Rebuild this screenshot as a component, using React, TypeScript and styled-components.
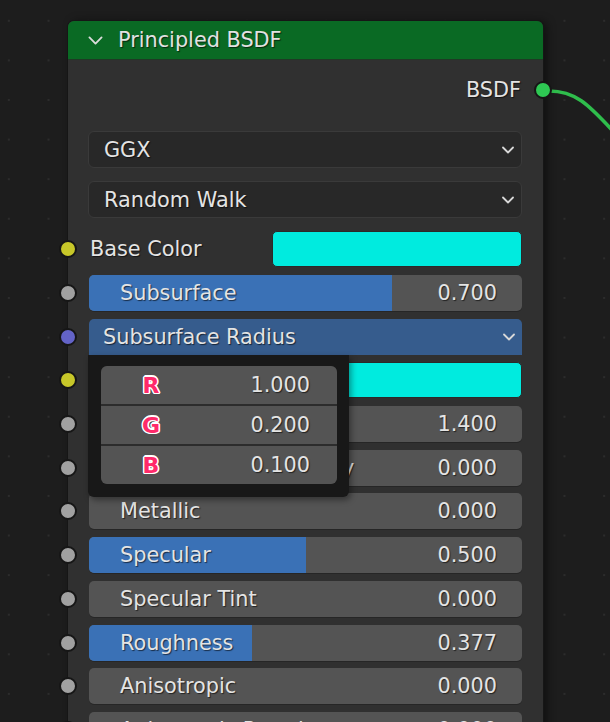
import React from "react";
import styled, { createGlobalStyle } from "styled-components";

const Global = createGlobalStyle`
  html, body { margin: 0; padding: 0; overflow: hidden; background: #1d1d1d; }
  * { box-sizing: border-box; }
`;

const Canvas = styled.div`
  position: relative;
  width: 610px;
  height: 722px;
  overflow: hidden;
  background-color: #1d1d1d;
  background-image: radial-gradient(circle, #2c2c2c 1.2px, transparent 1.5px);
  background-size: 39.7px 39.6px;
  background-position: -11px 1px;
  font-family: "DejaVu Sans", "Liberation Sans", sans-serif;
  font-size: 20.8px;
  color: #e4e4e4;
`;

const Link = styled.svg`
  position: absolute;
  left: 0;
  top: 0;
  pointer-events: none;
`;

const Node = styled.div`
  position: absolute;
  left: 68px;
  top: 21px;
  width: 475px;
  height: 760px;
  background: #303030;
  border-radius: 6px 6px 0 0;
  box-shadow: 0 0 0 1px #161616, 4px 0 10px rgba(0, 0, 0, 0.45);
`;

const Header = styled.div`
  display: flex;
  align-items: center;
  gap: 14px;
  height: 39px;
  padding-left: 19px;
  background: #0a6a24;
  border-radius: 6px 6px 0 0;
  border-bottom: 1px solid #1f3a25;
  text-shadow: 1px 1px 1px rgba(0, 0, 0, 0.6);
`;

const Title = styled.span`
  color: #e2e2e2;
`;

const Body = styled.div`
  display: flex;
  flex-direction: column;
  padding: 0 21px 0 20px;
`;

const OutputRow = styled.div`
  position: relative;
  display: flex;
  justify-content: flex-end;
  align-items: center;
  height: 36px;
  margin-top: 12px;
  padding-right: 1px;
  text-shadow: 1px 1px 1px rgba(0, 0, 0, 0.6);
`;

const Socket = styled.span<{ $color: string; $side?: "left" | "right"; $size?: number }>`
  position: absolute;
  top: 50%;
  width: ${(p) => p.$size ?? 18}px;
  height: ${(p) => p.$size ?? 18}px;
  margin-top: ${(p) => -(p.$size ?? 18) / 2}px;
  ${(p) =>
    p.$side === "right"
      ? `right: ${-21 - (p.$size ?? 18) / 2}px;`
      : `left: ${-20 - (p.$size ?? 18) / 2}px;`}
  border-radius: 50%;
  background: ${(p) => p.$color};
  border: 2px solid #161616;
  z-index: 2;
`;

const Dropdown = styled.div<{ $mt: number }>`
  display: flex;
  align-items: center;
  justify-content: space-between;
  height: 37px;
  margin-top: ${(p) => p.$mt}px;
  padding: 0 6px 0 15px;
  background: #282828;
  border: 1.5px solid #3a3a3a;
  border-radius: 6px;
  text-shadow: 1px 1px 1px rgba(0, 0, 0, 0.6);
`;

const Chevron = ({ size = 14, color = "#d8d8d8", stroke = 1.8 }: { size?: number; color?: string; stroke?: number }) => (
  <svg width={size} height={size} viewBox="0 0 14 14">
    <path d="M2 4.5 L7 9.5 L12 4.5" fill="none" stroke={color} strokeWidth={stroke} strokeLinecap="round" strokeLinejoin="round" />
  </svg>
);

const Inputs = styled.div`
  display: flex;
  flex-direction: column;
  gap: 7.7px;
  margin-top: 8px;
`;

const ColorRow = styled.div`
  position: relative;
  display: flex;
  align-items: center;
  justify-content: space-between;
  height: 36px;
  margin-top: 13px;
  text-shadow: 1px 1px 1px rgba(0, 0, 0, 0.6);
`;

const Label = styled.span`
  padding-left: 2px;
`;

const Swatch = styled.div<{ $color: string; $width?: string }>`
  width: ${(p) => p.$width ?? "100%"};
  height: 36px;
  background: ${(p) => p.$color};
  border-radius: 5px;
  border: 1px solid #2a2a2a;
`;

const InputRow = styled.div`
  position: relative;
  height: 36px;
`;

const Slider = styled.div`
  position: relative;
  display: flex;
  align-items: center;
  justify-content: space-between;
  height: 36px;
  margin-left: 1px;
  padding: 0 25px 0 31px;
  background: #545454;
  border-radius: 5px;
  overflow: hidden;
  box-shadow: 0 1px 0 #262626;
  text-shadow: 1px 1px 1px rgba(0, 0, 0, 0.6);
`;

const Fill = styled.div`
  position: absolute;
  left: 0;
  top: 0;
  bottom: 0;
  background: #3a71b6;
`;

const SliderText = styled.span`
  position: relative;
  white-space: nowrap;
`;

const VectorHeader = styled.div`
  display: flex;
  align-items: center;
  justify-content: space-between;
  height: 36px;
  margin-left: 1px;
  padding: 0 6px 0 14px;
  background: #365c8d;
  border-radius: 5px 5px 0 0;
  text-shadow: 1px 1px 1px rgba(0, 0, 0, 0.6);
`;

const Popup = styled.div`
  position: absolute;
  top: 100%;
  left: 0;
  width: 261px;
  padding: 11px 12px 13px 13px;
  background: #181818;
  border-radius: 0 0 6px 6px;
  box-shadow: 2px 3px 6px rgba(0, 0, 0, 0.4);
  z-index: 5;
`;

const VectorBox = styled.div`
  display: flex;
  flex-direction: column;
  gap: 1.5px;
  background: #2c2c2c;
  border-radius: 6px;
  overflow: hidden;
`;

const VectorField = styled.div`
  position: relative;
  display: flex;
  align-items: center;
  justify-content: flex-end;
  height: 38.5px;
  padding-right: 27px;
  background: #545454;
  text-shadow: 1px 1px 1px rgba(0, 0, 0, 0.6);
`;

const Axis = styled.span`
  position: absolute;
  left: 50px;
  top: 50%;
  transform: translate(-50%, -50%);
  font-weight: bold;
  font-size: 22px;
  color: #ff2a6a;
  text-shadow: -1.5px 0 0 #fff, 1.5px 0 0 #fff, 0 -1.5px 0 #fff, 0 1.5px 0 #fff,
    -1px -1px 0 #fff, 1px 1px 0 #fff, -1px 1px 0 #fff, 1px -1px 0 #fff;
`;

type SliderItem = { name: string; value: number; socket: string };

const sliders: SliderItem[] = [
  { name: "Subsurface IOR", value: 1.4, socket: "#a1a1a1" },
  { name: "Subsurface Anisotropy", value: 0, socket: "#a1a1a1" },
  { name: "Metallic", value: 0, socket: "#a1a1a1" },
  { name: "Specular", value: 0.5, socket: "#a1a1a1" },
  { name: "Specular Tint", value: 0, socket: "#a1a1a1" },
  { name: "Roughness", value: 0.377, socket: "#a1a1a1" },
  { name: "Anisotropic", value: 0, socket: "#a1a1a1" },
  { name: "Anisotropic Rotation", value: 0, socket: "#a1a1a1" },
  { name: "Sheen", value: 0, socket: "#a1a1a1" },
];

const SliderField = ({ item, factor = true }: { item: SliderItem; factor?: boolean }) => (
  <InputRow>
    <Socket $color={item.socket} />
    <Slider>
      {factor && item.value > 0 && item.value <= 1 && (
        <Fill style={{ width: `${item.value * 100}%` }} />
      )}
      <SliderText>{item.name}</SliderText>
      <SliderText>{item.value.toFixed(3)}</SliderText>
    </Slider>
  </InputRow>
);

export default function App() {
  return (
    <>
      <Global />
      <Canvas>
        <Link width="610" height="722">
          <path d="M549 91 C 575 91, 588 104, 612 130" fill="none" stroke="#2fbd4c" strokeWidth="3.5" />
        </Link>
        <Node>
          <Header>
            <Chevron size={17} color="#dcdcdc" stroke={1.5} />
            <Title>Principled BSDF</Title>
          </Header>
          <Body>
            <OutputRow>
              <span>BSDF</span>
              <Socket $color="#2ec853" $side="right" $size={18} />
            </OutputRow>
            <Dropdown $mt={23}>
              <span>GGX</span>
              <Chevron />
            </Dropdown>
            <Dropdown $mt={13}>
              <span>Random Walk</span>
              <Chevron />
            </Dropdown>
            <ColorRow>
              <Socket $color="#c7c729" />
              <Label>Base Color</Label>
              <Swatch $color="#00ebdf" $width="250px" />
            </ColorRow>
            <Inputs>
              <SliderField item={{ name: "Subsurface", value: 0.7, socket: "#a1a1a1" }} />
              <InputRow>
                <Socket $color="#6363c7" />
                <VectorHeader>
                  <span>Subsurface Radius</span>
                  <Chevron />
                </VectorHeader>
                <Popup>
                  <VectorBox>
                    <VectorField>
                      <Axis>R</Axis>1.000
                    </VectorField>
                    <VectorField>
                      <Axis>G</Axis>0.200
                    </VectorField>
                    <VectorField>
                      <Axis>B</Axis>0.100
                    </VectorField>
                  </VectorBox>
                </Popup>
              </InputRow>
              <InputRow>
                <Socket $color="#c7c729" />
                <Swatch $color="#00ebdf" />
              </InputRow>
              {sliders.map((s, i) => (
                <SliderField key={s.name} item={s} factor={i !== 0} />
              ))}
            </Inputs>
          </Body>
        </Node>
      </Canvas>
    </>
  );
}
